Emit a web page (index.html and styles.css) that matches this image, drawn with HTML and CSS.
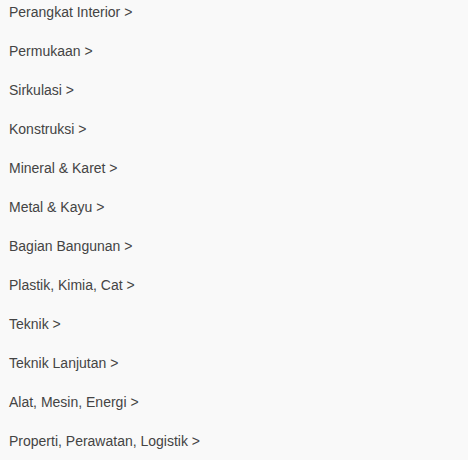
FILE: index.html
```html
<!DOCTYPE html>
<html>
<head>
<meta charset="utf-8">
<link rel="stylesheet" href="styles.css">
</head>
<body>
<ul class="cats">
<li class="cat">Perangkat Interior &gt;</li>
<li class="cat">Permukaan &gt;</li>
<li class="cat">Sirkulasi &gt;</li>
<li class="cat">Konstruksi &gt;</li>
<li class="cat">Mineral &amp; Karet &gt;</li>
<li class="cat">Metal &amp; Kayu &gt;</li>
<li class="cat">Bagian Bangunan &gt;</li>
<li class="cat">Plastik, Kimia, Cat &gt;</li>
<li class="cat">Teknik &gt;</li>
<li class="cat">Teknik Lanjutan &gt;</li>
<li class="cat">Alat, Mesin, Energi &gt;</li>
<li class="cat">Properti, Perawatan, Logistik &gt;</li>
</ul>
</body>
</html>
```
FILE: styles.css
```css
html, body {
  margin: 0;
  padding: 0;
  background: #f9f9f9;
}
body {
  font-family: "Liberation Sans", Arial, sans-serif;
  font-size: 14px;
  color: #444;
}
.cats {
  list-style: none;
  margin: 0;
  padding: 0 0 0 9px;
  display: flex;
  flex-direction: column;
}
.cat {
  line-height: 16px;
  height: 16px;
  padding: 4px 0 19px;
}
```
